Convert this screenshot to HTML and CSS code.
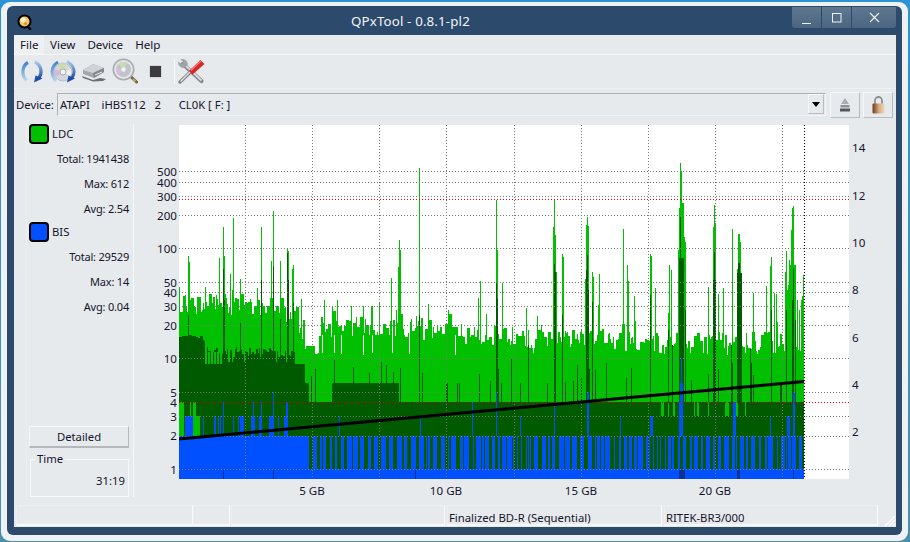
FILE: index.html
```html
<!DOCTYPE html>
<html lang="en">
<head>
<meta charset="utf-8">
<title>QPxTool</title>
<link rel="stylesheet" href="styles.css">
</head>
<body>
<div class="frame">
  <div class="win">
    <header class="titlebar">
      <div class="title-left">
        <svg class="logo" width="15" height="16" viewBox="0 0 15 16">
          <path d="M10 12l3 3" stroke="#000" stroke-width="2.4" stroke-linecap="round"/>
          <circle cx="7.5" cy="7.5" r="6" fill="#f6c66a" stroke="#000" stroke-width="2"/>
          <circle cx="6" cy="6" r="2.6" fill="#fff3c8"/>
          <circle cx="8.5" cy="9.5" r="1.6" fill="#e8902c"/>
        </svg>
      </div>
      <div class="title-text">QPxTool - 0.8.1-pl2</div>
      <div class="winbtns">
        <div class="winbtn w-min"><svg width="10" height="10" viewBox="0 0 10 10"><path d="M0 9.5h9" stroke="#eef2f6" stroke-width="1"/></svg></div>
        <div class="winbtn w-max"><svg width="10" height="10" viewBox="0 0 10 10"><rect x=".5" y=".5" width="8.5" height="8.5" fill="none" stroke="#eef2f6"/></svg></div>
        <div class="winbtn w-close"><svg width="11" height="11" viewBox="0 0 11 11"><path d="M1 1l9 9M10 1l-9 9" stroke="#eef2f6" stroke-width="1.1"/></svg></div>
      </div>
    </header>
    <div class="client">
      <nav class="menubar">
        <span class="menu menu-on">File</span>
        <span class="menu">View</span>
        <span class="menu">Device</span>
        <span class="menu">Help</span>
      </nav>
      <div class="toolbar">
        <svg class="tool t-refresh" width="26" height="24" viewBox="0 0 26 24">
          <defs>
            <linearGradient id="arcL" x1="0" y1="0" x2="0" y2="1"><stop offset="0" stop-color="#3f80d0"/><stop offset="1" stop-color="#bcd6ee"/></linearGradient>
            <linearGradient id="arcR" x1="0" y1="0" x2="0" y2="1"><stop offset="0" stop-color="#a9c8e8"/><stop offset="1" stop-color="#1d4fa6"/></linearGradient>
          </defs>
          <path d="M9 2.5C3 6 2 15 7.500 20.500" fill="none" stroke="url(#arcL)" stroke-width="3.200"/>
          <path d="M16 2C22 5 24 12 20 18" fill="none" stroke="url(#arcR)" stroke-width="3.200"/>
          <path d="M23.500 18.500L15 22.500l1.500-7z" fill="#1d4fa6"/>
        </svg>
        <svg class="tool t-cd" width="26" height="24" viewBox="0 0 26 24">
          <circle cx="13" cy="12" r="9" fill="#d4d8dc" stroke="#a8acb2" stroke-width=".7"/>
          <path d="M13 12L7 5.500A9 9 0 0 1 17 4z" fill="#c9dcae"/>
          <path d="M13 12L5 9a9 9 0 0 0 1 8z" fill="#d7b9d8"/>
          <path d="M13 12l7 4a9 9 0 0 0 1-7z" fill="#eef0f2"/>
          <circle cx="13" cy="12" r="3" fill="#f2f4f6" stroke="#8e949a" stroke-width=".7"/>
          <path d="M8 2C1 6 0 15 6 21" fill="none" stroke="url(#arcL)" stroke-width="3"/>
          <path d="M17 1.500C24 5 26 12 22 18" fill="none" stroke="url(#arcR)" stroke-width="3"/>
          <path d="M25 18.500L17 22.500l1.500-7z" fill="#1d4fa6"/>
        </svg>
        <svg class="tool t-drive" width="26" height="20" viewBox="0 0 26 20">
          <path d="M2 8L12 2l11 4v4l-10 6-11-4z" fill="#a4a8ad"/>
          <path d="M2 8L12 2l11 4-11 5z" fill="#d0d3d6"/>
          <path d="M12 11l11-5v4l-10 6z" fill="#84888d"/>
          <path d="M1 14l11 4 7-2 6 1-3 2-10 .5L2 16z" fill="#6b6f74"/>
          <path d="M14 13l7-3" stroke="#eceef0" stroke-width="1"/>
        </svg>
        <svg class="tool t-mag" width="26" height="26" viewBox="0 0 26 26">
          <path d="M17 17l7.500 7" stroke="#6b6151" stroke-width="3" stroke-linecap="round"/>
          <path d="M21 21l2.500 2.500" stroke="#c9a648" stroke-width="2"/>
          <circle cx="11.500" cy="11.500" r="10.200" fill="#e3e5e7" stroke="#a8abaf" stroke-width="1.600"/>
          <circle cx="11.500" cy="11.500" r="7.500" fill="#bfc3c8"/>
          <path d="M11.500 11.500L6 6a7.500 7.500 0 0 1 9-.5z" fill="#c7dbb0"/>
          <path d="M11.500 11.500L4 11a7.500 7.500 0 0 0 3 6z" fill="#dcbcd8"/>
          <circle cx="11.500" cy="11.500" r="2.200" fill="#f2f3f5"/>
        </svg>
        <div class="stop"></div>
        <div class="tool-sep"></div>
        <svg class="tool t-tools" width="27" height="25" viewBox="0 0 27 25">
          <path d="M5 5L23.500 22" stroke="#83878c" stroke-width="4.200" stroke-linecap="round"/>
          <path d="M6 5L23.500 21.500" stroke="#dcdee0" stroke-width="1.800"/>
          <path d="M0 2.500c0 4.500 3.500 7.500 7 6l2.500-2.500C11 3 6.500-1 2.500 0l3 3.500-1.500 1.500z" fill="#a0a4a9"/>
          <path d="M2 23L13.500 12" stroke="#7e8287" stroke-width="3.400" stroke-linecap="round"/>
          <path d="M2.500 22.500L13 12" stroke="#dcdee0" stroke-width="1.400"/>
          <path d="M14.500 15.500L11 12 22.500 1l4 4z" fill="#d8262a"/>
          <path d="M13 11.500L23 2" stroke="#f27a78" stroke-width="1.200"/>
        </svg>
      </div>
      <div class="devicebar">
        <span class="dev-label">Device:</span>
        <div class="combo">
          <span class="combo-text">ATAPI    iHBS112   2      CL0K [ F: ]</span>
          <div class="combo-btn"><svg width="8" height="5" viewBox="0 0 8 5"><path d="M0 0h8L4 5z" fill="#000"/></svg></div>
        </div>
        <button class="sqbtn" type="button" aria-label="Eject"><svg width="12" height="14" viewBox="0 0 12 14"><path d="M6 0l4 6H2z" fill="#a8acb0"/><rect x="1.500" y="7" width="9" height="2.500" fill="#8e9296"/><rect x="1" y="10.500" width="10" height="3" fill="#54585c"/></svg></button>
        <button class="sqbtn" type="button" aria-label="Lock"><svg width="13" height="18" viewBox="0 0 13 18"><defs><linearGradient id="lockG" x1="0" x2="1" y1="0" y2="0"><stop offset="0" stop-color="#6d3a20"/><stop offset=".55" stop-color="#d7ae82"/><stop offset="1" stop-color="#e9d9b8"/></linearGradient></defs><path d="M3 8V4.500a3.500 3.500 0 0 1 7 0V8" fill="none" stroke="#8e9094" stroke-width="1.800"/><rect x=".5" y="7.500" width="12" height="10" rx="1" fill="url(#lockG)"/></svg></button>
      </div>
      <main class="main">
        <aside class="panel">
          <div class="legend"><span class="swatch swatch-ldc"></span><span>LDC</span></div>
          <div class="stat">Total: 1941438</div>
          <div class="stat">Max: 612</div>
          <div class="stat">Avg: 2.54</div>
          <div class="legend legend-b"><span class="swatch swatch-bis"></span><span>BIS</span></div>
          <div class="stat">Total: 29529</div>
          <div class="stat">Max: 14</div>
          <div class="stat">Avg: 0.04</div>
          <button class="detailed" type="button">Detailed</button>
          <fieldset class="timebox">
            <legend class="timelegend">Time</legend>
            <div class="timeval">31:19</div>
          </fieldset>
        </aside>
        <section class="chart" id="chart">
          <canvas id="plot" class="plot" width="670" height="354"></canvas>
        </section>
      </main>
      <footer class="status">
        <div class="cell c1"></div>
        <div class="cell c2"></div>
        <div class="cell c3"></div>
        <div class="cell c4">Finalized BD-R (Sequential)</div>
        <div class="cell c5">RITEK-BR3/000</div>
        <svg class="grip" width="14" height="14" viewBox="0 0 14 14"><path d="M13 3L3 13M13 7l-6 6M13 11l-2 2" stroke="#fff" stroke-width="1.200"/></svg>
      </footer>
    </div>
  </div>
</div>
<script src="script.js"></script>
</body>
</html>
```

FILE: styles.css
```css
* { box-sizing: border-box; }
html, body { margin: 0; height: 100%; }
body {
  width: 910px; height: 542px; overflow: hidden;
  padding: 2px 2px 1px 1px;
  background: linear-gradient(#2b93d6, #4a8fa8);
  font-family: "Noto Sans", sans-serif;
  font-size: 11.3px; color: #14142a;
}
.frame {
  width: 907px; height: 539px;
  padding: 4px 6px 6px 6px;
  background: #eef2f5;
  border-radius: 9px;
}
.win {
  height: 529px;
  padding: 0 6px 8px 7px;
  background: #2c4a6b;
  border-radius: 6px;
  display: flex; flex-direction: column;
}
.titlebar {
  height: 29px; flex: none;
  display: flex; align-items: flex-start;
}
.title-left { width: 337px; flex: none; padding: 8px 0 0 3px; }
.logo { display: block; }
.title-text { color: #f2f5f8; font-size: 13.3px; line-height: 30px; letter-spacing: .15px; }
.winbtns { display: flex; gap: 1px; padding-top: 1px; margin-left: auto; }
.winbtn {
  height: 21px; display: flex; align-items: center; justify-content: center;
  background: linear-gradient(#5f7890, #4b6581);
}
.winbtn.w-min { width: 29px; border-radius: 0 0 0 3px; padding-top: 3px; }
.winbtn.w-max { width: 29px; }
.winbtn.w-close { width: 44px; border-radius: 0 0 3px 0; }
.client {
  flex: 1; display: flex; flex-direction: column; min-height: 0;
  background: #e7eaed;
}
.menubar {
  height: 20px; flex: none; display: flex; align-items: stretch;
  border-bottom: 1px solid #f4f6f7;
}
.menu { padding: 0 6px; line-height: 19px; font-size: 11.6px; }
.menu-on { background: #eef0f2; width: 30px; }
.toolbar {
  height: 34px; flex: none; display: flex; align-items: center;
  padding-left: 5px;
  border-bottom: 1px solid #eef0f2;
}
.tool { display: block; flex: none; }
.t-refresh { margin-right: 5px; }
.t-cd { margin-right: 5px; }
.t-drive { margin-right: 5px; }
.t-mag { margin-right: 12px; margin-top: -1px; }
.stop {
  width: 11px; height: 11px; flex: none; margin-right: 13px;
  background: #3a3c40; box-shadow: 0 0 1px #777;
}
.tool-sep { width: 1px; height: 25px; flex: none; margin-right: 3px; background: #f7f8f9; }
.devicebar {
  height: 29px; flex: none; display: flex; align-items: flex-start;
  padding: 4px 0 0 2px;
}
.dev-label { width: 41px; line-height: 24px; flex: none; }
.combo {
  width: 769px; height: 23px; flex: none;
  display: flex; justify-content: space-between; align-items: stretch;
  border: 1px solid #f4f5f6; border-top: 1px solid #aeb2b6; border-left: 1px solid #aeb2b6;
  background: #e7eaed; padding: 0 1px 1px 2px;
}
.combo-text { line-height: 22px; white-space: pre; }
.combo-btn {
  width: 16px; display: flex; align-items: center; justify-content: center;
  border: 1px solid #f6f7f8; border-right-color: #b8bcc0; border-bottom-color: #b8bcc0;
}
.sqbtn {
  width: 30px; height: 26px; flex: none; margin: -1px 0 0 4px; padding: 0;
  display: flex; align-items: center; justify-content: center;
  background: #e7eaed;
  border: 1px solid #f6f7f8; border-right-color: #b8bcc0; border-bottom-color: #b8bcc0;
}
.sqbtn + .sqbtn { margin-left: 3px; }
.main {
  flex: 1; min-height: 0; display: flex;
  padding-left: 12px;
}
.panel {
  width: 108px; height: 373px; flex: none; margin-top: 6px;
  padding: 0 4px 0 2px;
  display: flex; flex-direction: column;
  border-left: 1px solid #eceef0; border-right: 1px solid #f6f7f8;
}
.legend { height: 20px; display: flex; align-items: center; gap: 3px; line-height: 20px; margin-bottom: 2px; }
.legend-b { margin-top: 1px; margin-bottom: 2px; }
.swatch { width: 20px; height: 20px; border: 2px solid #000; border-radius: 4px; flex: none; }
.swatch-ldc { background: #00c000; }
.swatch-bis { background: #0050ff; }
.stat { height: 25px; line-height: 25px; text-align: right; white-space: nowrap; font-size: 11px; letter-spacing: -.2px; }
.detailed {
  width: 100px; height: 22px; flex: none; margin: auto 0 0 0; padding: 0;
  font: inherit; color: inherit; background: #e7eaed;
  border: 1px solid #f6f7f8; border-right-color: #b4b8bc; border-bottom: 2px solid #b4b8bc;
}
.timebox {
  width: 99px; height: 45px; flex: none; margin: 4px 0 0 1px; padding: 0 3px 0 0;
  border: 1px solid #f7f8f9;
  min-inline-size: 0;
}
.timelegend { padding: 0 2px; margin-left: 4px; line-height: 14px; font-size: 11.3px; }
.timeval { text-align: right; line-height: 17px; margin-top: 6px; }
.chart { position: relative; flex: 1; }
.plot { position: absolute; left: 45px; top: 7px; display: block; }
.ylab, .rlab, .xlab { position: absolute; line-height: 14px; white-space: nowrap; font-size: 11.6px; }
.ylab { right: 719px; }
.rlab { left: 718px; }
.xlab { width: 60px; margin-left: -30px; text-align: center; }
.status {
  position: relative;
  height: 22px; flex: none; display: flex; padding-left: 2px;
}
.cell {
  height: 21px; padding-left: 1px; line-height: 23px; white-space: nowrap;
  border: 1px solid #eceef0; border-right-color: #f8f9fa; border-bottom: 2px solid #f8f9fa;
}
.c1 { width: 177px; }
.c2 { width: 37px; margin-right: 1px; }
.c3 { width: 214px; margin-right: 2px; }
.c4 { width: 215px; margin-right: 2px; }
.c5 { width: 214px; }
.grip { position: absolute; right: 0; bottom: 0; }
```

FILE: script.js
```js
(function () {
  var OX = 179, OY = 125, W = 670, H = 354, END = 804;
  var seed = 12345;
  function rnd() {
    seed = (seed * 1664525 + 1013904223) >>> 0;
    return ((seed >>> 8) & 0xffff) / 65536;
  }
  function interp(t, x) {
    for (var i = 1; i < t.length; i++) {
      if (x <= t[i][0]) {
        var a = t[i - 1], b = t[i];
        return a[1] + (b[1] - a[1]) * (x - a[0]) / (b[0] - a[0]);
      }
    }
    return t[t.length - 1][1];
  }
  var cv = document.getElementById('plot');
  var g = cv.getContext('2d');
  g.fillStyle = '#fff';
  g.fillRect(0, 0, W, H);
  function bar(col, x, top, bottom, w) {
    g.fillStyle = col;
    g.fillRect(x - OX, Math.round(top) - OY, w || 1, Math.round(bottom) - Math.round(top));
  }

  var LIGHT = '#00c000', DARK = '#005a00', BLUE = '#0050ff', DBLUE = '#0a3296';

  /* light green envelope */
  var lightEnv = [[179, 302], [200, 304], [240, 305], [280, 308], [292, 318], [303, 330], [306, 346], [315, 346], [318, 326], [400, 328], [480, 335], [560, 338], [640, 342], [800, 342], [804, 330]];
  var x = 179;
  while (x < END) {
    var w = rnd() < 0.55 ? 1 : (rnd() < 0.6 ? 2 : 3);
    var e = interp(lightEnv, x);
    var flat = x >= 306 && x < 315;
    var t = flat ? 346 : e + (rnd() - 0.5) * 22;
    if (!flat && rnd() < 0.14) t -= rnd() * 18;
    if (t > 354) t = 354;
    bar(LIGHT, x, t, 470, Math.min(w, END - x));
    x += w;
  }
  /* tall spikes: [x, top] */
  var spikes = [[188,256],[189,262],[205,287],[219,258],[223,227],[224,256],[230,274],[233,218],[240,279],[257,288],[261,227],[271,261],[273,211],[280,261],[287,249],[288,251],[292,269],[293,265],[301,299],[324,300],[337,300],[351,306],[363,306],[379,303],[391,278],[398,267],[399,240],[400,250],[419,168],[448,310],[478,298],[480,281],[496,200],[497,250],[502,283],[526,308],[553,227],[554,200],[555,235],[556,272],[562,254],[563,257],[585,279],[586,225],[587,217],[588,226],[592,272],[593,277],[598,305],[599,274],[623,229],[627,265],[628,281],[634,296],[650,254],[651,256],[655,288],[668,313],[669,265],[671,270],[678,250],[679,208],[680,163],[681,171],[682,203],[683,203],[684,237],[685,242],[708,287],[713,227],[714,205],[715,223],[718,294],[723,288],[732,229],[737,269],[738,234],[739,234],[740,242],[741,280],[753,293],[766,286],[770,266],[771,257],[774,293],[776,294],[785,272],[786,251],[787,290],[788,285],[789,260],[790,265],[791,230],[792,208],[793,206],[794,265],[795,265],[797,300],[799,310],[801,300],[802,296],[803,275]];
  spikes.forEach(function (s) { bar(LIGHT, s[0], s[1], 470); });

  /* white slivers reaching deep in the green band */
  [318,322,334,341,363,372,392,409,455,533,664,668,690,707,727,745,757].forEach(function (s) {
    bar('#fff', s, 335, 352 + rnd() * 3);
  });

  /* dark green */
  var darkEnv = [[179, 337], [190, 335], [204, 340], [205, 352], [293, 352], [294, 364], [303, 364], [304, 383], [307, 383], [308, 402], [331, 402], [332, 383], [397, 383], [398, 402], [804, 402]];
  x = 179;
  while (x < END) {
    w = rnd() < 0.5 ? 2 : 1;
    t = interp(darkEnv, x);
    if (x >= 200 && x < 293) {
      t += rnd() < 0.2 ? 10 : (rnd() - 0.5) * 10;
    }
    if (x >= 420 && rnd() < 0.035) t -= 19;
    bar(DARK, x, t, 470, Math.min(w, END - x));
    x += w;
  }
  /* notch of bright green in the x 200..232 zone */
  for (x = 205; x < 226; x += 3) { bar(LIGHT, x, 352, 364, 2); }
  /* thin dark bars */
  for (x = 300; x < END; x += 1) {
    if (rnd() < 0.09) {
      var top = 402 - 19 - rnd() * 24;
      if (x > 420 && rnd() < 0.3) top = 400 - rnd() * 70;
      bar(DARK, x, Math.max(top, 345), 470);
    }
  }
  var darkSpikes = [[188,315],[223,269],[224,300],[240,323],[261,280],[273,267],[280,319],[287,253],[288,280],[293,303],[419,315],[496,283],[497,299],[554,264],[555,272],[562,315],[586,270],[587,255],[588,290],[592,302],[650,295],[668,330],[680,217],[681,258],[682,258],[679,258],[683,258],[685,310],[714,252],[715,280],[713,280],[737,273],[738,263],[739,263],[740,273],[741,273],[771,310],[786,310],[793,268],[792,300],[795,320]];
  darkSpikes.forEach(function (s) { bar(DARK, s[0], s[1], 470); });

  /* light green inside the dark band, far left and far right */
  bar(LIGHT, 179, 402, 436, 5);
  bar(LIGHT, 190, 402, 416, 1);
  bar(LIGHT, 193, 402, 416, 3);
  bar(LIGHT, 193, 416, 436, 7);
  [[661,3],[668,1],[673,2],[694,1],[697,2],[708,1],[725,4],[736,2],[745,1]].forEach(function (s) {
    bar(LIGHT, s[0], 402, 416, s[1]);
  });

  /* blue: solid up to 2 on the first stretch, then a comb */
  bar(BLUE, 184, 436, 470, 120);
  bar(BLUE, 185, 416, 436, 8);
  [[223,1,402,436],[253,1,402,436],[261,1,402,436],[273,1,392,436],[286,2,402,436],[214,2,416,436],[218,1,416,436],[233,1,416,436],[238,1,416,436],[240,4,416,436],[251,4,416,436],[259,3,416,436],[269,5,416,436],[278,1,416,436],[284,4,416,436],[203,1,416,436],[220,1,416,436]].forEach(function (s) {
    bar(BLUE, s[0], s[2], s[3], s[1]);
  });
  bar(BLUE, 179, 436, 470, 5);
  bar(BLUE, 179, 469, 479, END - 179);
  x = 304;
  while (x < END) {
    var bw = 1 + Math.floor(rnd() * 5);
    var gap = 1 + Math.floor(rnd() * 4);
    if (x + bw > END) bw = END - x;
    bar(BLUE, x, 436, 470, bw);
    x += bw + gap;
  }
  [[339,1,416],[420,1,416],[472,1,402],[496,1,392],[520,1,416],[554,1,402],[587,2,392],[620,1,416],[650,3,416],[679,1,402],[680,3,383],[681,1,358],[733,3,402],[770,1,416],[787,3,416],[793,2,392]].forEach(function (s) {
    bar(BLUE, s[0], s[2], 436, s[1]);
  });
  bar(DARK, 803, 436, 470, 1);

  /* dark blue marks at the foot */
  [[223,1],[273,1],[415,1],[679,5],[684,1],[737,3],[793,1]].forEach(function (s) {
    bar(DBLUE, s[0], 470, 479, s[1]);
  });

  /* grid */
  var hgrid = [
    ['1', 469.5], ['2', 436], ['3', 416.5], ['4', 402.5], ['5', 392.5], ['10', 358.5],
    ['20', 325.5], ['30', 306.5], ['40', 292.5], ['50', 282.5], ['100', 248.5],
    ['200', 215.5], ['300', 196.5], ['400', 182.5], ['500', 171.5]
  ];
  var vgrid = [245, 312, 379, 446, 514, 581, 648, 715, 782];

  function hline(y, col) {
    g.fillStyle = col;
    for (var i = 0; i < W; i += 3) { g.fillRect(i, Math.floor(y) - OY, 1, 1); }
  }
  function vline(px, col) {
    g.fillStyle = col;
    for (var j = 0; j < H; j += 3) { g.fillRect(px - OX, j, 1, 1); }
  }
  hgrid.forEach(function (h) { hline(h[1], '#787878'); });
  vgrid.forEach(function (v) { vline(v, '#787878'); });
  vline(END, '#000');
  hline(199.5, '#e00000');
  hline(402.5, '#e00000');

  /* trend line */
  g.strokeStyle = '#000';
  g.lineWidth = 2.8;
  g.beginPath();
  g.moveTo(0, 439 - OY);
  g.lineTo(END - OX, 381.5 - OY);
  g.stroke();

  /* axis labels */
  var chart = document.getElementById('chart');
  var CY = 118; /* page y of the chart box */
  var CX = 134; /* page x of the chart box */
  function label(cls, text, y, px) {
    var el = document.createElement('span');
    el.className = cls;
    el.textContent = text;
    el.style.top = (y - CY - 7) + 'px';
    if (px !== undefined) el.style.left = (px - CX) + 'px';
    chart.appendChild(el);
  }
  hgrid.forEach(function (h) { label('ylab', h[0], h[1]); });
  [['14', 148], ['12', 196], ['10', 243], ['8', 290], ['6', 338], ['4', 385], ['2', 432]].forEach(function (r) {
    label('rlab', r[0], r[1]);
  });
  [['5 GB', 312], ['10 GB', 446], ['15 GB', 581], ['20 GB', 715]].forEach(function (r) {
    label('xlab', r[0], 491, r[1]);
  });
})();
```
